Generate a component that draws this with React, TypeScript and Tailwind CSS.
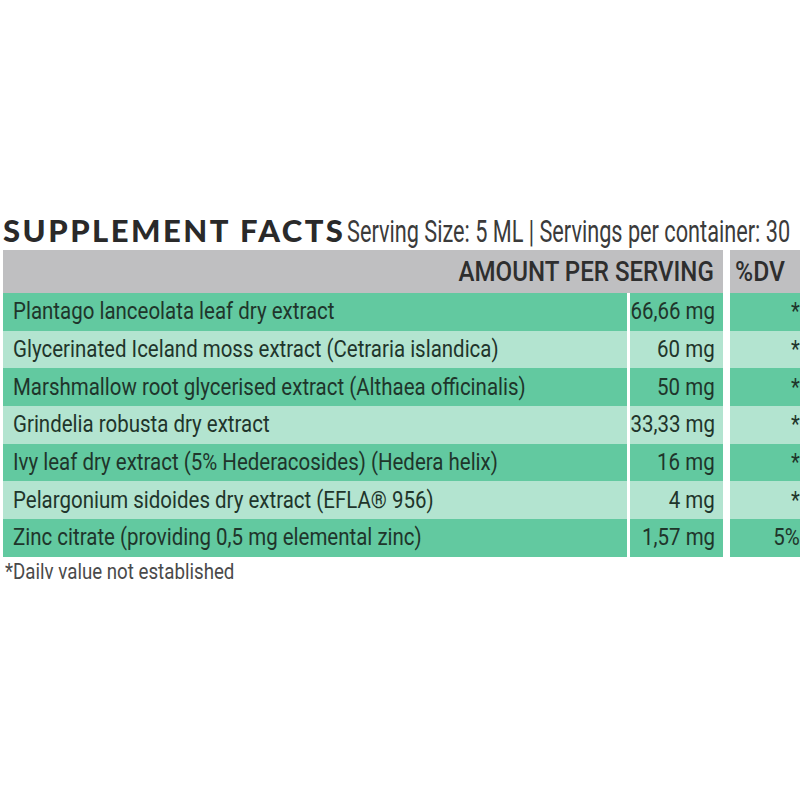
import React from "react";

const rows: { name: string; amt: string; dv: string }[] = [
  { name: "Plantago lanceolata leaf dry extract", amt: "66,66 mg", dv: "*" },
  { name: "Glycerinated Iceland moss extract (Cetraria islandica)", amt: "60 mg", dv: "*" },
  { name: "Marshmallow root glycerised extract (Althaea officinalis)", amt: "50 mg", dv: "*" },
  { name: "Grindelia robusta dry extract", amt: "33,33 mg", dv: "*" },
  { name: "Ivy leaf dry extract (5% Hederacosides) (Hedera helix)", amt: "16 mg", dv: "*" },
  { name: "Pelargonium sidoides dry extract (EFLA® 956)", amt: "4 mg", dv: "*" },
  { name: "Zinc citrate (providing 0,5 mg elemental zinc)", amt: "1,57 mg", dv: "5%" },
];

export default function App() {
  return (
    <div className="w-[800px] h-[800px] bg-white overflow-hidden pt-[215px]" style={{ fontFamily: "Roboto, sans-serif" }}>
      <div className="flex items-baseline pl-[3px] h-[35px] whitespace-nowrap">
        <span className="font-['Lato',sans-serif] font-black text-[31px] tracking-[2.5px] text-[#2a2a2a] leading-none">
          SUPPLEMENT FACTS
        </span>
        <span className="inline-block ml-[2px] origin-left scale-x-[0.7] text-[31px] text-[#3b3b3b] leading-none">
          Serving Size: 5 ML | Servings per container: 30
        </span>
      </div>
      <div className="ml-[3px] w-[820px]">
        <div className="flex h-[43px]">
          <div className="w-[720px] bg-[#bfbfc1] flex items-center justify-end pr-[9px] overflow-hidden">
            <span className="inline-block origin-right scale-x-[0.86] text-[28px] font-medium text-[#2e2e2e] whitespace-nowrap leading-none">
              AMOUNT PER SERVING
            </span>
          </div>
          <div className="ml-[7px] w-[80px] bg-[#bfbfc1] flex items-center pl-[5px] overflow-hidden">
            <span className="inline-block origin-left scale-x-[0.88] text-[28px] font-medium text-[#2e2e2e] whitespace-nowrap leading-none">
              %DV
            </span>
          </div>
        </div>
        {rows.map((r, i) => {
          const bg = i % 2 === 0 ? "bg-[#62c9a0]" : "bg-[#b3e4d0]";
          return (
            <div key={i} className="flex h-[37.7px]">
              <div className={`w-[624px] ${bg} flex items-center pl-[10px] overflow-hidden`}>
                <span className="inline-block origin-left scale-x-[0.89] text-[23px] text-[#1f352b] whitespace-nowrap leading-none">
                  {r.name}
                </span>
              </div>
              <div className={`ml-[3px] w-[93px] ${bg} flex items-center justify-end pr-[8px] overflow-hidden`}>
                <span className="inline-block origin-right scale-x-[0.89] text-[23px] text-[#1f352b] whitespace-nowrap leading-none">
                  {r.amt}
                </span>
              </div>
              <div className={`ml-[7px] w-[80px] ${bg} flex items-center justify-end pr-[10px] overflow-hidden`}>
                <span className="inline-block origin-right scale-x-[0.89] text-[23px] text-[#1f352b] whitespace-nowrap leading-none">
                  {r.dv}
                </span>
              </div>
            </div>
          );
        })}
        <div className="pt-[4px] pl-[2px]">
          <span className="inline-block origin-left scale-x-[0.85] text-[22px] text-[#4a4a4a] whitespace-nowrap leading-none">
            *Dailv value not established
          </span>
        </div>
      </div>
    </div>
  );
}
